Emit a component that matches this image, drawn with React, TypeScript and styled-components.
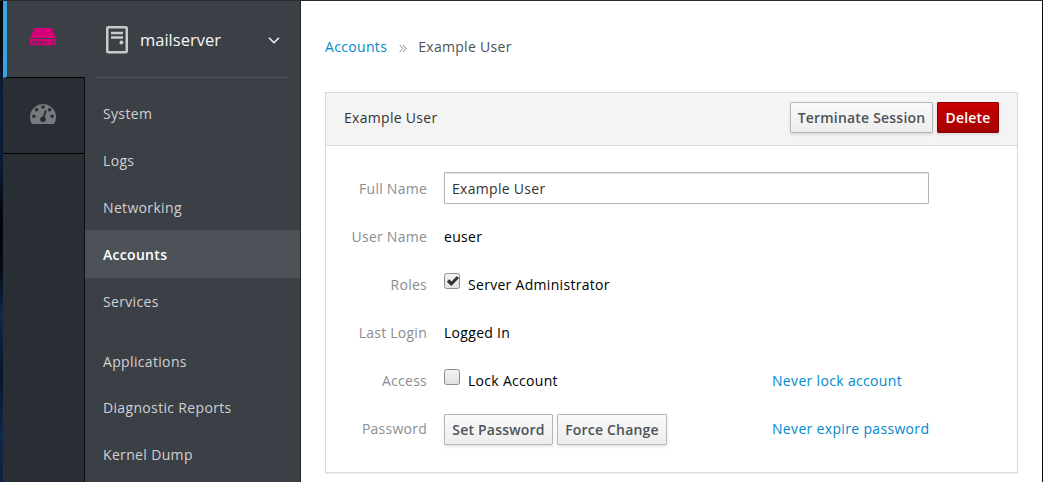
import React from 'react';
import styled, { createGlobalStyle, css } from 'styled-components';

const GlobalStyle = createGlobalStyle`
  *, *::before, *::after { box-sizing: border-box; }
  body {
    margin: 0;
    overflow: hidden;
    font-family: 'Open Sans', 'Noto Sans', sans-serif;
    font-size: 14px;
    line-height: 20px;
    letter-spacing: 0.3px;
    background: #fff;
  }
`;

const Window = styled.div`
  display: flex;
  width: 1043px;
  height: 482px;
  overflow: hidden;
  border-top: 1px solid #2b2b2d;
  border-right: 1px solid #0b0b0c;
`;

const Desktop = styled.div`
  flex: none;
  width: 3px;
  background: linear-gradient(#03060c 0, #050a14 10%, #0c1d38 18%, #0a1a33 35%, #02040a 45%, #040810 55%, #10284a 65%, #07152a 78%, #10284c 90%, #0b2040 100%);
`;

const Rail = styled.nav`
  flex: none;
  width: 82px;
  background: #292e34;
  border-right: 1px solid #0d0e10;
`;

const RailItem = styled.a<{ $active?: boolean }>`
  display: flex;
  align-items: center;
  justify-content: center;
  height: ${p => (p.$active ? 77 : 76)}px;
  border-bottom: 1px solid #020203;
  ${p =>
    p.$active &&
    css`
      width: 82px;
      padding-right: 5px;
      padding-bottom: 4px;
      border-left: 4px solid #39a5dc;
      background: #3b3f46;
    `}
  ${p => !p.$active && css`padding: 0 1px 4px 0;`}
`;

const Sidebar = styled.nav`
  flex: none;
  width: 216px;
  background: #3b3f46;
  border-right: 1px solid #22252a;
`;

const HostHeader = styled.div`
  display: flex;
  align-items: center;
  height: 77px;
  margin: 0 12px;
  padding: 2px 8px 0 9px;
  border-bottom: 1px solid #50555c;
  color: #f5f5f5;
`;

const HostName = styled.span`
  flex: 1;
  margin-left: 12px;
  font-size: 16.5px;
  letter-spacing: 0;
`;

const Menu = styled.ul<{ $gap?: number }>`
  margin: ${p => p.$gap ?? 0}px 0 0;
  padding: 0;
  list-style: none;
`;

const MenuItem = styled.li<{ $active?: boolean; $height?: number }>`
  display: flex;
  align-items: center;
  height: ${p => p.$height ?? 47}px;
  padding: ${p => (p.$height ? 2 : 0)}px 18px 0;
  letter-spacing: ${p => (p.$active ? 0.3 : 0.34)}px;
  color: ${p => (p.$active ? '#fff' : '#d1d1d1')};
  font-weight: ${p => (p.$active ? 600 : 400)};
  background: ${p => (p.$active ? '#4d5258' : 'transparent')};
`;

const Main = styled.main`
  flex: 1;
  padding: 35px 24px 0;
  background: #fff;
`;

const Breadcrumb = styled.div`
  display: flex;
  align-items: center;
  height: 22px;
  color: #4d5258;
`;

const Link = styled.a`
  letter-spacing: 0.33px;
  color: #0088ce;
`;

const Separator = styled.svg`
  margin: 2px 11px 0 12px;
`;

const Card = styled.section`
  width: 693px;
  height: 381px;
  margin-top: 34px;
  border: 1px solid #d9d9d9;
  box-shadow: 0 1px 1px rgba(0, 0, 0, 0.05);
`;

const CardHeader = styled.header`
  display: flex;
  align-items: flex-start;
  gap: 4px;
  height: 53px;
  padding: 9px 18px 0;
  border-bottom: 1px solid #d9d9d9;
  background: #f4f4f4;
  color: #333;
`;

const CardTitle = styled.span`
  flex: 1;
  padding-top: 6px;
`;

const Button = styled.button<{ $danger?: boolean; $width: number }>`
  width: ${p => p.$width}px;
  height: 31px;
  padding: 1px 0 0;
  border: 1px solid ${p => (p.$danger ? '#8b0000' : '#b7b7b7')};
  border-radius: 1px;
  font: 600 14px/20px 'Open Sans', sans-serif;
  letter-spacing: 0.2px;
  white-space: nowrap;
  color: ${p => (p.$danger ? '#fff' : '#4d5258')};
  background: ${p =>
    p.$danger ? 'linear-gradient(#cc0000, #a30000)' : 'linear-gradient(#fafafa, #ededed)'};
  box-shadow: 0 2px 3px rgba(3, 3, 3, 0.1);
`;

const Form = styled.div`
  display: grid;
  grid-template-columns: 101px 328px 1fr;
  grid-auto-rows: 48px;
  padding-top: 18px;
  color: #000;
`;

const Label = styled.label`
  padding-top: 15px;
  text-align: right;
  letter-spacing: 0.25px;
  color: #8b8d8f;
`;

const Field = styled.div<{ $wide?: boolean }>`
  display: flex;
  align-items: flex-start;
  gap: 4px;
  padding: 15px 0 0 17px;
  ${p => p.$wide && css`grid-column: 2 / 4;`}
`;

const TextInput = styled.input`
  width: 485px;
  height: 32px;
  margin-top: -7px;
  padding: 1px 7px 0;
  border: 1px solid #b5b5b5;
  border-radius: 1px;
  box-shadow: inset 0 1px 1px rgba(3, 3, 3, 0.1);
  font: 14px/20px 'Open Sans', sans-serif;
  letter-spacing: 0.3px;
  color: #333;
  outline: none;
`;

const CheckLabel = styled.span`
  margin-left: 4px;
`;

const CheckSvg = styled.svg`
  flex: none;
  margin-top: -2px;
`;

const Actions = styled.div`
  display: flex;
  gap: 4px;
  margin-top: -5px;
`;

const ServerIcon = () => (
  <svg width="27" height="18" viewBox="0 0 27 18">
    <path fill="#d6007b" d="M4.5 0h17.3L26 10H0zM0 11h26v6.3H0z" />
    <g fill="#3b3f46">
      <rect x="2.2" y="13.3" width="2.4" height="2" />
      <rect x="6" y="13.3" width="2.4" height="2" />
      <rect x="9.6" y="13.3" width="2.4" height="2" />
      <rect x="13.1" y="13.3" width="2.4" height="2" />
      <rect x="22" y="13.3" width="2.4" height="2" />
    </g>
  </svg>
);

const GaugeIcon = () => (
  <svg width="26" height="21" viewBox="0 0 26 21">
    <path fill="#777b80" d="M2 21A13 13 0 1 1 24 21Z" />
    <g fill="#292e34">
      <circle cx="3.9" cy="13.3" r="1.8" />
      <circle cx="6.6" cy="6.8" r="1.8" />
      <circle cx="13" cy="4" r="1.8" />
      <circle cx="19.6" cy="6.8" r="1.8" />
      <circle cx="22.2" cy="13.3" r="1.8" />
      <circle cx="13" cy="16.3" r="2.8" />
      <path d="M14.9 7l1.6.4-2.2 9-2.1-.4z" />
    </g>
  </svg>
);

const HostIcon = () => (
  <svg width="22" height="28" viewBox="0 0 22 28">
    <rect x="1.25" y="1.25" width="19.5" height="25" rx="1" fill="none" stroke="#c9cbca" strokeWidth="2.5" />
    <path stroke="#c9cbca" strokeWidth="2.5" d="M5 6.9h12M5 11.6h12" />
    <circle cx="15.4" cy="16.5" r="1.9" fill="#c9cbca" />
  </svg>
);

const Checkbox = ({ checked = false }: { checked?: boolean }) => (
  <CheckSvg width="16" height="16" viewBox="0 0 16 16">
    <defs>
      <linearGradient id="box" x1="0" y1="0" x2="0" y2="1">
        <stop offset="0" stopColor="#f5f5f5" />
        <stop offset="1" stopColor="#e1e1e1" />
      </linearGradient>
    </defs>
    <rect x="0.5" y="0.5" width="15" height="15" rx="2" fill="url(#box)" stroke="#8c8f8d" />
    {checked && <path d="M2.8 8.7l2.4-2.5 2.3 2.2 5.2-5.2 2.4 1.7-7.8 8.1z" fill="#2e3436" />}
  </CheckSvg>
);

export default function App() {
  return (
    <>
      <GlobalStyle />
      <Window>
        <Desktop />
        <Rail>
          <RailItem $active>
            <ServerIcon />
          </RailItem>
          <RailItem>
            <GaugeIcon />
          </RailItem>
        </Rail>
        <Sidebar>
          <HostHeader>
            <HostIcon />
            <HostName>mailserver</HostName>
            <svg width="12" height="8" viewBox="0 0 12 8">
              <path d="M1 1.7l5 5 5-5" fill="none" stroke="#f0f0f0" strokeWidth="1.6" />
            </svg>
          </HostHeader>
          <Menu $gap={12}>
            <MenuItem>System</MenuItem>
            <MenuItem>Logs</MenuItem>
            <MenuItem $height={46}>Networking</MenuItem>
            <MenuItem $active $height={48}>Accounts</MenuItem>
            <MenuItem>Services</MenuItem>
          </Menu>
          <Menu $gap={13}>
            <MenuItem>Applications</MenuItem>
            <MenuItem $height={44}>Diagnostic Reports</MenuItem>
            <MenuItem $height={50}>Kernel Dump</MenuItem>
          </Menu>
        </Sidebar>
        <Main>
          <Breadcrumb>
            <Link>Accounts</Link>
            <Separator width="8" height="9" viewBox="0 0 8 9">
              <path d="M.7 1l3 3.5-3 3.5M4 1l3 3.5L4 8" fill="none" stroke="#8c8c8c" strokeWidth="1" />
            </Separator>
            <span>Example User</span>
          </Breadcrumb>
          <Card>
            <CardHeader>
              <CardTitle>Example User</CardTitle>
              <Button $width={143}>Terminate Session</Button>
              <Button $width={62} $danger>Delete</Button>
            </CardHeader>
            <Form>
              <Label>Full Name</Label>
              <Field $wide>
                <TextInput defaultValue="Example User" />
              </Field>
              <Label>User Name</Label>
              <Field $wide>euser</Field>
              <Label>Roles</Label>
              <Field $wide>
                <Checkbox checked />
                <CheckLabel>Server Administrator</CheckLabel>
              </Field>
              <Label>Last Login</Label>
              <Field $wide>Logged In</Field>
              <Label>Access</Label>
              <Field>
                <Checkbox />
                <CheckLabel>Lock Account</CheckLabel>
              </Field>
              <Field>
                <Link>Never lock account</Link>
              </Field>
              <Label>Password</Label>
              <Field>
                <Actions>
                  <Button $width={109}>Set Password</Button>
                  <Button $width={110}>Force Change</Button>
                </Actions>
              </Field>
              <Field>
                <Link>Never expire password</Link>
              </Field>
            </Form>
          </Card>
        </Main>
      </Window>
    </>
  );
}
